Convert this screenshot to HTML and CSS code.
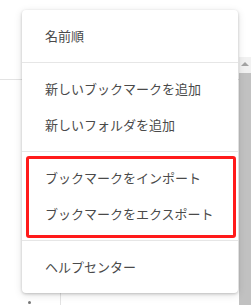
FILE: index.html
```html
<!DOCTYPE html>
<html lang="ja">
<head>
    <meta charset="UTF-8">
    <title>ブックマーク</title>
    <link rel="stylesheet" href="styles.css">
</head>
<body>
<div class="page">
    <div class="content">
        <div class="toolbar"></div>
        <div class="main">
            <div class="sidebar">
                <span class="dot"></span>
            </div>
            <div class="list"></div>
        </div>

        <!-- メニュー -->
        <div class="menu">
            <ul class="group">
                <li>名前順</li>
            </ul>
            <ul class="group">
                <li>新しいブックマークを追加</li>
                <li>新しいフォルダを追加</li>
            </ul>
            <ul class="group marked">
                <li>ブックマークをインポート</li>
                <li>ブックマークをエクスポート</li>
            </ul>
            <ul class="group">
                <li>ヘルプセンター</li>
            </ul>
        </div>
    </div>
    <div class="scrollbar">
        <div class="arrow"></div>
        <div class="thumb"></div>
    </div>
</div>
</body>
</html>
```

FILE: styles.css
```css
*{
    margin: 0;
    padding: 0;
    box-sizing: border-box;
}
body{
    background: #fff;
    font-family: "Noto Sans CJK JP", "Noto Sans", sans-serif;
}
.page{
    display: flex;
    width: 251px;
    height: 305px;
    overflow: hidden;
}
.content{
    position: relative;
    flex: 1;
    display: flex;
    flex-direction: column;
}
.toolbar{
    height: 80px;
    border-bottom: 1px solid #e3e3e3;
}
.main{
    flex: 1;
    display: flex;
}
.sidebar{
    width: 61px;
    border-right: 1px solid #e3e3e3;
    display: flex;
    justify-content: center;
    align-items: flex-end;
    padding: 0 0 1px 0;
}
.dot{
    width: 3px;
    height: 3px;
    border-radius: 50%;
    background: #777;
    margin-right: 1px;
}
/* スクロールバー */
.scrollbar{
    width: 12px;
    margin-top: 57px;
    background: #f1f1f1;
    display: flex;
    flex-direction: column;
    align-items: center;
}
.arrow{
    margin-top: 5px;
    width: 0;
    height: 0;
    border-left: 4px solid transparent;
    border-right: 4px solid transparent;
    border-bottom: 4px solid #a3a3a3;
}
.thumb{
    margin-top: 7px;
    flex: 1;
    width: 100%;
    background: #c1c1c1;
}
/* メニュー */
.menu{
    position: absolute;
    left: 22px;
    top: 10px;
    width: 216px;
    background: #fff;
    border-radius: 4px;
    box-shadow: 0 1px 3px rgba(0,0,0,.2), 0 2px 8px rgba(0,0,0,.12);
}
.group{
    position: relative;
    list-style: none;
    padding: 8px 0;
    border-top: 1px solid #e6e6e6;
}
.group:first-child{
    border-top: none;
}
.group li{
    height: 36px;
    line-height: 36px;
    padding-left: 23px;
    font-size: 13px;
    color: #4a4a4a;
    white-space: nowrap;
}
.marked:after{
    content: "";
    position: absolute;
    left: 4px;
    right: 2px;
    top: 4px;
    bottom: 2px;
    border: 3px solid #ff1a1a;
    border-radius: 3px;
}
```
